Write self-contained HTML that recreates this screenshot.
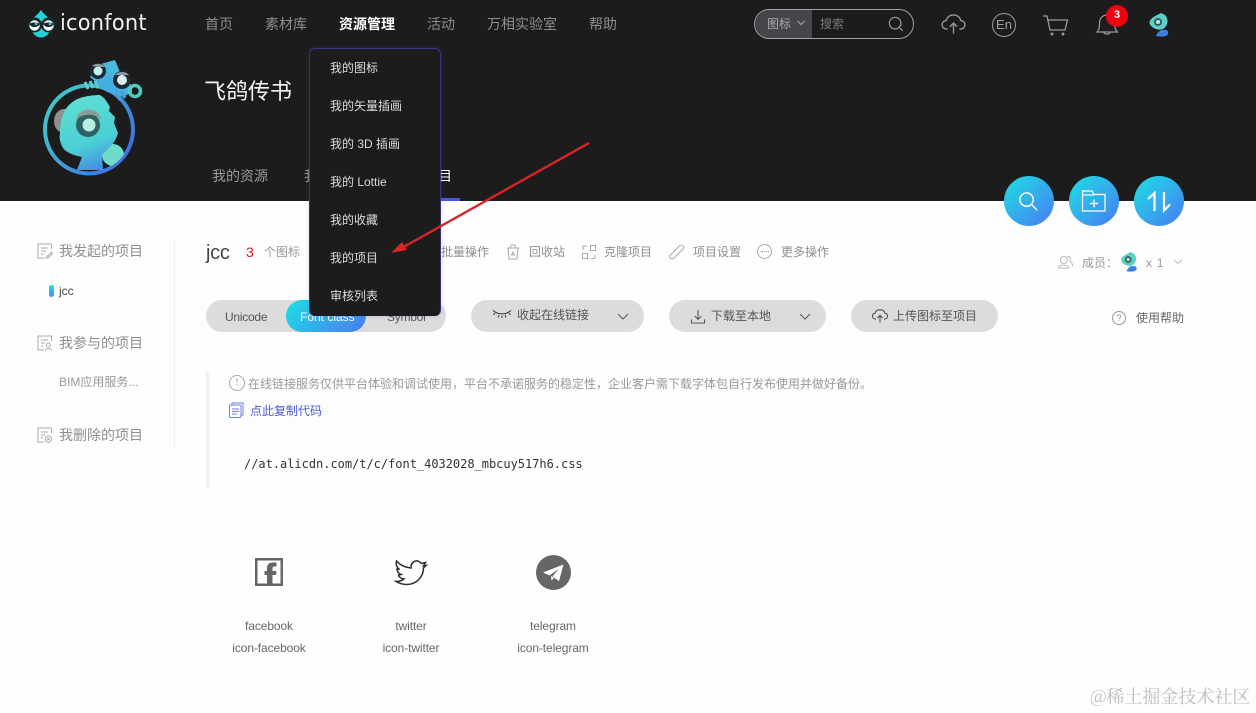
<!DOCTYPE html>
<html lang="zh"><head><meta charset="utf-8"><title>iconfont</title>
<style>
*{box-sizing:border-box}
html,body{margin:0;padding:0;width:1256px;height:713px;overflow:hidden;background:#fefefe}
body{position:relative;font-family:"Liberation Sans","Noto Sans CJK SC",sans-serif;color:#666}
.t{position:absolute;white-space:nowrap;line-height:20px}
.a{position:absolute}
svg{position:absolute;overflow:visible}
.nav{font-size:14px;color:#8d8d8d;top:14px}
.m{font-size:12px;color:#dcdcdc;left:330px}
.act{font-size:12px;color:#8f8f8f;top:242px}
.side{font-size:14px;color:#8f8f8f;left:59px}
.pill{position:absolute;background:#dcdcdc;border-radius:16px;height:32px;top:300px}
.lab{font-size:12px;color:#555}
.grad{background:linear-gradient(135deg,#1be0e4,#4a7bf2)}
.c{position:absolute;width:50px;height:50px;border-radius:50%;top:176px}
.ic{font-size:12px;color:#666;text-align:center;width:140px;letter-spacing:-.1px}
</style></head><body>
<div class="a" style="left:0;top:0;width:1256px;height:201px;background:#1c1c1d"></div>

<!-- logo -->
<svg style="left:27px;top:9px" width="30" height="30" viewBox="0 0 30 30">
<path d="M14 .8C16 4.500 20 7 22 10C25 14 25 20 22 24C20 27 17 28.500 14 28.500C11 28.500 8 27 6 24C3 20 3 14 6 10C8 7 12 4.500 14 .8Z" fill="#1fd3d6"/>
<circle cx="7.500" cy="16" r="7.500" fill="#14262c"/><circle cx="21.500" cy="16" r="7.500" fill="#14262c"/>
<circle cx="7.500" cy="16.500" r="5.200" fill="#fff"/><circle cx="21.500" cy="16.500" r="5.200" fill="#fff"/>
<path d="M2.500 15C3.500 13 11.500 13 12.500 15C11.500 19 3.500 19 2.500 15Z" fill="#14262c"/>
<path d="M16.500 15C17.500 13 25.500 13 26.500 15C25.500 19 17.500 19 16.500 15Z" fill="#14262c"/>
<circle cx="9" cy="15" r="1.300" fill="#2bd4d8"/><circle cx="23" cy="15" r="1.300" fill="#2bd4d8"/>
</svg>
<div class="t" style="left:60px;top:9px;font-size:22px;line-height:30px;color:#f2f2f2;letter-spacing:.25px;font-family:'DejaVu Sans','Liberation Sans',sans-serif;font-weight:400;transform-origin:left center;transform:scaleX(.95)">iconfont</div>

<div class="t nav" style="left:205px">首页</div>
<div class="t nav" style="left:265px">素材库</div>
<div class="t nav" style="left:339px;color:#fff;font-weight:700">资源管理</div>
<div class="t nav" style="left:427px">活动</div>
<div class="t nav" style="left:487px">万相实验室</div>
<div class="t nav" style="left:589px">帮助</div>

<!-- search -->
<div class="a" style="left:754px;top:9px;width:160px;height:30px;border:1px solid #a0a0a0;border-radius:15px;overflow:hidden">
<div class="a" style="left:0;top:0;width:57px;height:28px;background:#45464c"></div>
</div>
<div class="t" style="left:767px;top:14px;font-size:12px;color:#a8a8a8">图标</div>
<svg style="left:797px;top:20px" width="8" height="6" viewBox="0 0 8 6"><path d="M.5 1L4 4.500 7.500 1" fill="none" stroke="#aaa"/></svg>
<div class="t" style="left:820px;top:14px;font-size:12px;color:#7a7a7a">搜索</div>
<svg style="left:888px;top:16px" width="16" height="16" viewBox="0 0 18 18" fill="none" stroke="#999" stroke-width="1.300"><circle cx="8" cy="8" r="6.500"/><path d="M12.500 12.500L16.500 16.500"/></svg>

<!-- header icons -->
<svg style="left:941px;top:14px" width="25" height="21" viewBox="0 0 27 23" fill="none" stroke="#9a9a9a" stroke-width="1.500"><path d="M7 16.500H6C3 16.500 1 14.500 1 11.800C1 9.200 3 7.300 5.500 7.200C6.500 3.500 9.500 1 13.500 1C17.500 1 20.500 3.500 21.500 7.200C24 7.300 26 9.200 26 11.800C26 14.500 24 16.500 21 16.500H20"/><path d="M13.500 21.500V10.500M9.500 14L13.500 10L17.500 14"/></svg>
<div class="a" style="left:992px;top:13px;width:24px;height:24px;border:1px solid #9a9a9a;border-radius:50%"></div>
<div class="t" style="left:992px;top:14px;width:24px;text-align:center;font-size:13px;color:#a0a0a0;line-height:22px">En</div>
<svg style="left:1042px;top:15px" width="27" height="21" viewBox="0 0 27 21" fill="none" stroke="#9a9a9a" stroke-width="1.300"><path d="M1 1H5L8 15H23L25.500 5H6"/><circle cx="10" cy="19" r=".8"/><circle cx="21" cy="19" r=".8"/></svg>
<svg style="left:1096px;top:12px" width="23" height="24" viewBox="0 0 23 24" fill="none" stroke="#9a9a9a" stroke-width="1.200"><path d="M1 20C3 18 3.500 16 3.500 11C3.500 6 7 3 11 3C15 3 18.500 6 18.500 11C18.500 16 19.500 18 21.500 20Z"/><path d="M8 20.500C8 22.500 14 22.500 14 20.500"/></svg>
<div class="a" style="left:1106px;top:5px;width:22px;height:22px;border-radius:50%;background:#f2000f"></div>
<div class="t" style="left:1106px;top:5px;width:22px;text-align:center;font-size:11px;line-height:21px;color:#fff;font-weight:700">3</div>

<!-- mini chameleon -->
<svg style="left:1147px;top:12px" width="24" height="26" viewBox="0 0 24 26"><path d="M9 24C11 19 15 17 17 18C20 17 22 20 21 22C20 25 13 25 9 24Z" fill="#3f80e8"/><path d="M14 1L18 3C22 7 21 14 16 17C11 19 4 16 2.500 11C2 7 8 4 14 1Z" fill="#5ccfc6"/><circle cx="11" cy="10" r="4" fill="#2b5e5e"/><circle cx="11" cy="10" r="2" fill="#c9f1ea"/></svg>

<!-- avatar -->
<svg style="left:40px;top:58px" width="106" height="122" viewBox="0 0 106 122">
<defs>
<linearGradient id="rg" x1="0" y1="0" x2="1" y2=".7"><stop offset="0" stop-color="#3fd6c8"/><stop offset="1" stop-color="#4170e0"/></linearGradient>
<linearGradient id="bd" x1=".3" y1="0" x2=".6" y2="1"><stop offset="0" stop-color="#5fdfd2"/><stop offset=".65" stop-color="#4ccfd4"/><stop offset="1" stop-color="#458fe6"/></linearGradient>
<linearGradient id="tp" x1="0" y1="1" x2="1" y2="0"><stop offset="0" stop-color="#46a0e6"/><stop offset="1" stop-color="#47c6d8"/></linearGradient>
<clipPath id="rc"><circle cx="49" cy="71.500" r="43"/></clipPath>
</defs>
<circle cx="49" cy="71.500" r="44" fill="#1c1c1d" stroke="url(#rg)" stroke-width="4"/>
<g clip-path="url(#rc)">
<ellipse cx="24" cy="63" rx="10" ry="12" fill="#8f8f8f"/>
<circle cx="73" cy="97" r="11" fill="#6fdcc8"/>
<path d="M60 37L64 40L67 44L70 49L69 53L75 59L74 65L78 75C76 82 73 86 70 89L62 97L63 112L37 112L42 99C32 97 26 94 23 90C20 85 19 80 20 75C20 65 22 58 25 52C29 46 34 42 40 40C46 38 54 37 60 37Z" fill="url(#bd)"/>
</g>
<circle cx="48" cy="67" r="12" fill="#2f6263"/><circle cx="49" cy="67" r="6.500" fill="#b9efe2"/>
<path d="M36 62C38 50 56 46 62 62C55 55 42 55 36 62Z" fill="#8d9a9a"/>
<path d="M57 7L75 2L80 14L92 28L92 34L83 39L67 34L50 19Z" fill="url(#tp)"/>
<circle cx="58" cy="13" r="8" fill="#1f2a33"/><circle cx="58" cy="13" r="4.500" fill="#c3f2ee"/>
<path d="M52 8C55 5 62 5 65 9L58 9Z" fill="#8f9a9f"/>
<circle cx="82" cy="22" r="9" fill="#1f2a33"/><circle cx="82" cy="22" r="5" fill="#dcf2f2"/>
<path d="M75 17C78 13 86 13 89 17L82 17Z" fill="#8f9a9f"/>
<circle cx="95" cy="33" r="5.500" fill="none" stroke="#4fcbc4" stroke-width="3.500"/>
<path d="M45 24l3 7M50 23l3 7M55 23l3 7" stroke="#58d2c8" stroke-width="3" fill="none"/>
<path d="M76 35l4 7M81 33l4 7" stroke="#4f9fdc" stroke-width="3" fill="none"/>
</svg>

<div class="t" style="left:204px;top:78px;font-size:22px;line-height:28px;color:#f4f4f4">飞鸽传书</div>

<div class="t" style="left:212px;top:166px;font-size:14px;color:#9a9a9a">我的资源</div>
<div class="t" style="left:304px;top:166px;font-size:14px;color:#9a9a9a">我</div>
<div class="t" style="left:424px;top:166px;font-size:14px;color:#fff;width:28px;text-align:right">目</div>
<div class="a" style="left:310px;top:198px;width:150px;height:3px;background:#4c55e8"></div>

<!-- round buttons -->
<div class="c grad" style="left:1004px"></div>
<div class="c grad" style="left:1069px"></div>
<div class="c grad" style="left:1134px"></div>
<svg style="left:1018px;top:191px" width="21" height="21" viewBox="0 0 22 22" fill="none" stroke="#fff" stroke-width="1.500"><circle cx="9" cy="9" r="7"/><path d="M14 14L20 20"/></svg>
<svg style="left:1081px;top:190px" width="26" height="22" viewBox="0 0 26 22" fill="none" stroke="#fff" stroke-width="1.200"><path d="M1.500 21V1H11L13 4.500H24V21Z"/><path d="M1.500 5H13"/><path d="M9 13.500H17M13 9.500V17.500" stroke-width="1.400"/></svg>
<svg style="left:1147px;top:191px" width="24" height="22" viewBox="0 0 24 22" fill="none" stroke="#fff" stroke-width="2.200"><path d="M1 8L7.500 2V20"/><path d="M17 1V19.500L23 13.500"/></svg>

<!-- sidebar -->
<svg style="left:37px;top:243px" width="16" height="16" viewBox="0 0 16 16" fill="none" stroke="#aaa"><path d="M14.500 6V1H1V15H8M4 5H11M4 8H9M4 11H7"/><path d="M9.500 14L14.500 9L15.500 10.500L11 15H9.500Z"/></svg>
<div class="t side" style="top:241px">我发起的项目</div>
<div class="a" style="left:49px;top:285px;width:5px;height:12px;border-radius:3px;background:linear-gradient(180deg,#1be0e4,#4a8bf2)"></div>
<div class="t" style="left:59px;top:281px;font-size:12px;color:#444">jcc</div>
<svg style="left:37px;top:335px" width="16" height="16" viewBox="0 0 16 16" fill="none" stroke="#aaa"><path d="M14.500 6V1H1V15H7M4 5H11M4 8H8M4 11H6"/><circle cx="11.500" cy="10" r="2"/><path d="M8.500 15.500C9 13 14 13 14.500 15.500"/></svg>
<div class="t side" style="top:333px">我参与的项目</div>
<div class="t" style="left:59px;top:372px;font-size:12px;color:#999">BIM应用服务...</div>
<svg style="left:37px;top:427px" width="16" height="16" viewBox="0 0 16 16" fill="none" stroke="#aaa"><path d="M14.500 6V1H1V15H7M4 5H11M4 8H8M4 11H6"/><circle cx="11.500" cy="12" r="3.200"/><path d="M10.300 10.800L12.700 13.200M12.700 10.800L10.300 13.200"/></svg>
<div class="t side" style="top:425px">我删除的项目</div>
<div class="a" style="left:174px;top:240px;width:1px;height:208px;background:#f0f0f0"></div>

<!-- title row -->
<div class="t" style="left:206px;top:241px;font-size:20px;line-height:24px;color:#444;letter-spacing:-.3px">jcc</div>
<div class="t" style="left:246px;top:242px;font-size:14px;color:#e8141c">3</div>
<div class="t" style="left:264px;top:242px;font-size:12px;color:#999">个图标</div>
<div class="t act" style="left:441px">批量操作</div>
<svg style="left:506px;top:244px" width="14" height="16" viewBox="0 0 14 16" fill="none" stroke="#aaa"><path d="M1 4H13M4 4L5 1H9L10 4M2 4L3 15H11L12 4"/><path d="M5.500 11L7 8L8.500 11Z"/></svg>
<div class="t act" style="left:529px">回收站</div>
<svg style="left:582px;top:245px" width="14" height="14" viewBox="0 0 14 14" fill="none" stroke="#aaa"><path d="M1 5V1H5M8.500 .5H13.500V5.500H8.500ZM.5 8.500H5.500V13.500H.5ZM9 13.500L13 13.500V10"/></svg>
<div class="t act" style="left:604px">克隆项目</div>
<svg style="left:669px;top:244px" width="16" height="16" viewBox="0 0 16 16" fill="none" stroke="#aaa"><path d="M1 11.500L10.500 2C11.500 1 13 .8 14 1.800C15 2.800 15 4 14 5L4.500 14.500C3 15.500 1.500 15 1 14C.5 13 .5 12.500 1 11.500Z"/></svg>
<div class="t act" style="left:693px">项目设置</div>
<div class="a" style="left:757px;top:244px;width:15px;height:15px;border:1px solid #aaa;border-radius:50%"></div>
<div class="a" style="left:761px;top:251px;width:8px;height:1px;border-top:1px dotted #999"></div>
<div class="t act" style="left:781px">更多操作</div>

<svg style="left:1058px;top:255px" width="15" height="14" viewBox="0 0 15 14" fill="none" stroke="#bbb"><circle cx="6" cy="5" r="3.500"/><path d="M.5 13C1 9 10 9 11 13ZM9 1.500C12 1 13.500 4 12 6.500C14 7.500 14.500 9.500 14.500 11"/></svg>
<div class="t" style="left:1082px;top:253px;font-size:12px;color:#999">成员：</div>
<svg style="left:1119px;top:251px" width="20" height="22" viewBox="0 0 24 26"><path d="M9 24C11 19 15 17 17 18C20 17 22 20 21 22C20 25 13 25 9 24Z" fill="#3f80e8"/><path d="M14 1L18 3C22 7 21 14 16 17C11 19 4 16 2.500 11C2 7 8 4 14 1Z" fill="#5ccfc6"/><circle cx="11" cy="10" r="4" fill="#2b5e5e"/><circle cx="11" cy="10" r="2" fill="#c9f1ea"/></svg>
<div class="t" style="left:1146px;top:253px;font-size:12px;color:#999;letter-spacing:.7px">x 1</div>
<svg style="left:1173px;top:259px" width="10" height="6" viewBox="0 0 10 6"><path d="M1 1L5 4.500L9 1" fill="none" stroke="#bbb"/></svg>

<!-- pills -->
<div class="pill" style="left:206px;width:240px"></div>
<div class="t lab" style="left:225px;top:307px;letter-spacing:-.25px">Unicode</div>
<div class="a grad" style="left:286px;top:300px;width:80px;height:32px;border-radius:16px"></div>
<div class="t" style="left:300px;top:307px;font-size:12px;color:#fff">Font class</div>
<div class="t lab" style="left:387px;top:307px;letter-spacing:-.25px">Symbol</div>

<div class="pill" style="left:471px;width:173px"></div>
<svg style="left:492px;top:309px" width="20" height="10" viewBox="0 0 20 10" fill="none" stroke="#333"><path d="M1 1.500C6 6 14 6 19 1.500M3 4L1.500 6M7 6L6 8.500M13 6L14 8.500M17 4L18.500 6M10 6.500V9"/></svg>
<div class="t lab" style="left:517px;top:305px">收起在线链接</div>
<svg style="left:617px;top:313px" width="12" height="7" viewBox="0 0 12 7"><path d="M1 1L6 6L11 1" fill="none" stroke="#555"/></svg>

<div class="pill" style="left:669px;width:157px"></div>
<svg style="left:690px;top:309px" width="16" height="15" viewBox="0 0 16 16" fill="none" stroke="#444"><path d="M1 11V15H15V11M8 1V11M4.500 7.500L8 11L11.500 7.500"/></svg>
<div class="t lab" style="left:711px;top:306px">下载至本地</div>
<svg style="left:799px;top:313px" width="12" height="7" viewBox="0 0 12 7"><path d="M1 1L6 6L11 1" fill="none" stroke="#555"/></svg>

<div class="pill" style="left:851px;width:147px"></div>
<svg style="left:872px;top:309px" width="16" height="14" viewBox="0 0 16 14" fill="none" stroke="#444"><path d="M4 10H3.500C2 10 .5 9 .5 7C.5 5.500 1.500 4.500 3 4.300C3.500 2 5.500 .8 8 .8C10.500 .8 12.500 2 13 4.300C14.500 4.500 15.500 5.500 15.500 7C15.500 9 14 10 12.500 10H12M8 13.500V6.500M5.500 9L8 6.500L10.500 9"/></svg>
<div class="t lab" style="left:893px;top:306px">上传图标至项目</div>

<div class="a" style="left:1112px;top:311px;width:14px;height:14px;border:1px solid #999;border-radius:50%"></div>
<div class="t" style="left:1112px;top:311px;width:14px;text-align:center;font-size:9px;line-height:14px;color:#888">?</div>
<div class="t" style="left:1136px;top:308px;font-size:12px;color:#666">使用帮助</div>

<!-- code panel -->
<div class="a" style="left:206px;top:372px;width:962px;height:116px;background:#fdfdfd;border-left:3px solid #f0f0f0"></div>
<div class="a" style="left:229px;top:375px;width:16px;height:16px;border:1px solid #aaa;border-radius:50%"></div>
<div class="t" style="left:229px;top:375px;width:16px;text-align:center;font-size:10px;line-height:16px;color:#999">!</div>
<div class="t" style="left:248px;top:374px;font-size:12px;color:#999">在线链接服务仅供平台体验和调试使用，平台不承诺服务的稳定性，企业客户需下载字体包自行发布使用并做好备份。</div>
<svg style="left:229px;top:402px" width="15" height="16" viewBox="0 0 15 16" fill="none" stroke="#7280e0"><path d="M3 3V1H14V13H12"/><rect x=".5" y="3" width="11.500" height="12.500" rx="1.500"/><path d="M3 7H10M3 9.500H10M3 12H8"/></svg>
<div class="t" style="left:250px;top:401px;font-size:12px;color:#4a5ad8">点此复制代码</div>
<div class="a" style="left:228px;top:440px;width:938px;height:47px;background:#fefefe"></div>
<div class="t" style="left:244px;top:454px;font-size:12px;color:#333;font-family:'DejaVu Sans Mono','Liberation Mono',monospace;letter-spacing:-.02px">//at.alicdn.com/t/c/font_4032028_mbcuy517h6.css</div>

<!-- icons -->
<svg style="left:255px;top:558px" width="28" height="28" viewBox="0 0 28 28"><path d="M0 0H28V28H0ZM2.500 2.500V25.500H12V17H9.500V13H12V10C12 6 14.500 4.500 18 4.500H21.500V8.500H19.500C18 8.500 17.500 9 17.500 11V13H21.500L21 17H17.500V25.500H25.500V2.500Z" fill="#666" fill-rule="evenodd"/></svg>
<svg style="left:395px;top:559px" width="32" height="27" viewBox="0 0 32 27" fill="none" stroke="#2c2c2c" stroke-width="1.500"><path d="M1.500 2C5 6 10 8.500 16 9C15.500 4 20 .5 24 2.500C25 3 26 4 26.500 4.500L30.500 3.500L28.500 7L31 6.500L28.500 9C28.500 18 21 25.500 12 25.500C8 25.500 4.500 24.500 1 22.500C4.500 22.500 7 21.500 9 20C6 19.500 4 18 3.500 16L6 15.500C3.500 14.500 2 12 2 10L4.500 10.500C2 8.500 .5 5.500 1.500 2Z"/></svg>
<svg style="left:536px;top:555px" width="35" height="35" viewBox="0 0 35 35"><circle cx="17.500" cy="17.500" r="17.500" fill="#666"/><path d="M7 17.500L27.500 9.500L23 26L16.500 21.500L22.500 14L13.500 20.500Z" fill="#fff"/><path d="M15 21L15.500 25.500L18 23Z" fill="#fff"/></svg>

<div class="t ic" style="left:199px;top:616px">facebook</div>
<div class="t ic" style="left:199px;top:638px">icon-facebook</div>
<div class="t ic" style="left:341px;top:616px">twitter</div>
<div class="t ic" style="left:341px;top:638px">icon-twitter</div>
<div class="t ic" style="left:483px;top:616px">telegram</div>
<div class="t ic" style="left:483px;top:638px">icon-telegram</div>

<!-- dropdown -->
<div class="a" style="left:309px;top:48px;width:132px;height:268px;background:#1c1c1d;border:1px solid #33357a;border-top-color:#383a8c;border-bottom-color:#1c1c1d;border-radius:6px;box-shadow:0 0 4px rgba(90,90,220,.25)"></div>
<div class="t m" style="top:58px">我的图标</div>
<div class="t m" style="top:96px">我的矢量插画</div>
<div class="t m" style="top:134px">我的 3D 插画</div>
<div class="t m" style="top:172px">我的 Lottie</div>
<div class="t m" style="top:210px">我的收藏</div>
<div class="t m" style="top:248px">我的项目</div>
<div class="t m" style="top:286px">审核列表</div>

<!-- arrow -->
<svg style="left:0;top:0" width="1256" height="713" viewBox="0 0 1256 713"><path d="M589 143L400 249" stroke="#d92428" stroke-width="2.400" fill="none"/><path d="M391 253L402 242L407 250Z" fill="#d92428"/></svg>

<div class="t" style="left:1090px;top:685px;font-size:18px;line-height:22px;color:#bdbdbd;font-family:'Noto Serif CJK SC','Liberation Serif',serif">@稀土掘金技术社区</div>
</body></html>
